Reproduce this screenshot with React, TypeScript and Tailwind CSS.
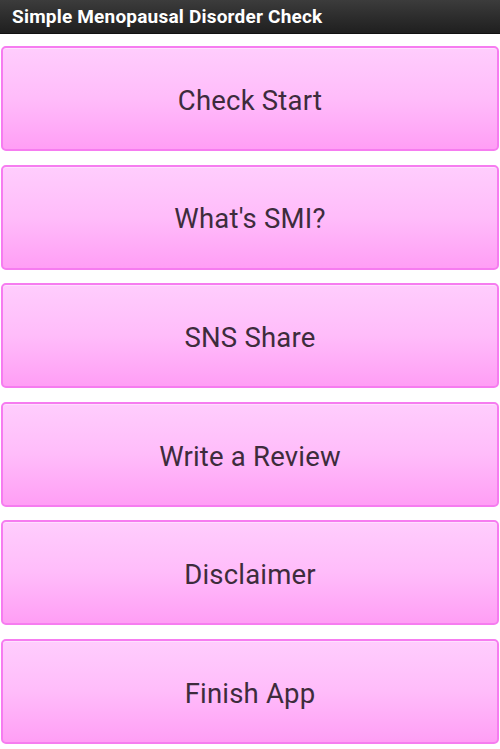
import React from "react";

const items = ["Check Start", "What's SMI?", "SNS Share", "Write a Review", "Disclaimer", "Finish App"];

export default function App() {
  return (
    <div className="w-[500px] h-[749px] bg-white overflow-hidden" style={{ fontFamily: "Roboto, 'Noto Sans', sans-serif" }}>
      <div className="h-[34px] flex items-center pl-[12px] pt-[1px] bg-gradient-to-b from-[#3c3c3c] to-[#1f1f1f] border-b border-[#111]">
        <span className="text-white font-bold text-[19px] tracking-[0.2px]">Simple Menopausal Disorder Check</span>
      </div>
      <div className="flex flex-col gap-[13.6px] pt-[12px] px-[1px]">
        {items.map((t) => (
          <div
            key={t}
            className="h-[105px] rounded-[5px] border-2 border-[#f67cf0] bg-gradient-to-b from-[#ffcdfd] via-[#ffbcfa] to-[#ff9ef5] flex items-center justify-center pt-[4px] shadow-[inset_0_1px_0_#ffe0ff]"
          >
            <span className="text-[27.5px] text-[#3d2c3c] tracking-[0.2px]">{t}</span>
          </div>
        ))}
      </div>
    </div>
  );
}
